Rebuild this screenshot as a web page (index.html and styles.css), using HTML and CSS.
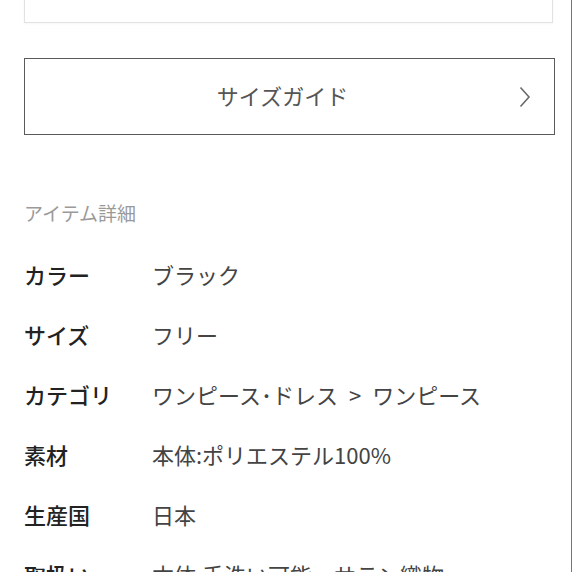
FILE: index.html
```html
<!DOCTYPE html>
<html lang="ja">
<head>
  <meta charset="UTF-8" />
  <meta name="viewport" content="width=device-width, initial-scale=1.0"/>
  <title>アイテム詳細</title>
  <link rel="stylesheet" href="styles.css">
</head>
<body>
  <div class="page">
    <div class="prev-box"></div>

    <a class="size-guide" href="#">
      <span>サイズガイド</span>
      <svg class="chevron" width="12" height="22" viewBox="0 0 12 22">
        <polyline points="1.5,1.5 10,11 1.5,20.5" fill="none" stroke="#6a6a6a" stroke-width="1.6"/>
      </svg>
    </a>

    <h2 class="section-title">アイテム詳細</h2>

    <dl class="details">
      <div class="row"><dt>カラー</dt><dd>ブラック</dd></div>
      <div class="row"><dt>サイズ</dt><dd>フリー</dd></div>
      <div class="row"><dt>カテゴリ</dt><dd>ワンピース･ドレス<span class="sep">&gt;</span>ワンピース</dd></div>
      <div class="row"><dt>素材</dt><dd>本体:ポリエステル100%</dd></div>
      <div class="row"><dt>生産国</dt><dd>日本</dd></div>
      <div class="row"><dt>取扱い</dt><dd>本体:手洗い可能、サテン織物</dd></div>
    </dl>
  </div>
</body>
</html>
```

FILE: styles.css
```css
* {
  box-sizing: border-box;
  margin: 0;
  padding: 0;
}

html, body {
  height: 100%;
  overflow: hidden;
}

body {
  font-family: "Noto Sans CJK JP", "Noto Sans", sans-serif;
  background: #fff;
  color: #333;
}

.page {
  height: 100%;
  padding: 0 18px 0 24px;
  border-right: 1px solid #777;
}

.prev-box {
  height: 23px;
  width: 529px;
  border: 1px solid #e2e2e2;
  border-top: none;
  box-shadow: 0 1px 2px rgba(0, 0, 0, 0.04);
}

.size-guide {
  display: flex;
  align-items: center;
  justify-content: center;
  position: relative;
  margin-top: 35px;
  width: 531px;
  height: 77px;
  padding-bottom: 4px;
  border: 1px solid #5a5a5a;
  text-decoration: none;
  color: #555;
  font-size: 22px;
}

.size-guide span {
  padding-right: 14px;
}

.chevron {
  position: absolute;
  right: 23px;
  top: 27px;
}

.section-title {
  margin-top: 64px;
  font-size: 19px;
  line-height: 28px;
  font-weight: normal;
  color: #9a9a9a;
}

.details {
  margin-top: 17px;
}

.row {
  display: flex;
  height: 60px;
  line-height: 60px;
  font-size: 22px;
}

.row dt {
  width: 128px;
  font-weight: 500;
  color: #222;
}

.row dd {
  color: #444;
}

.sep {
  padding: 0 11px;
}
```
